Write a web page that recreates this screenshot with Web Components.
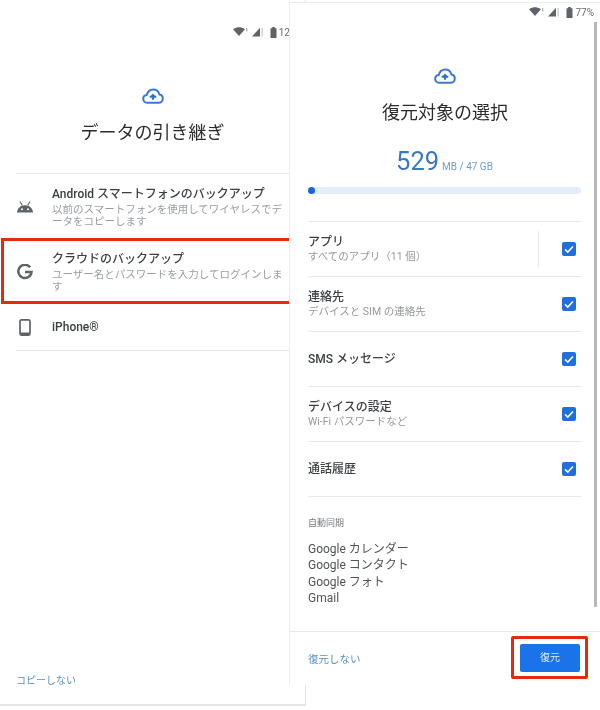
<!DOCTYPE html>
<html lang="ja">
<head>
<meta charset="utf-8">
<title>復元対象の選択</title>
<style>
  html, body { margin: 0; background: #fff; }
  body {
    position: relative;
    width: 600px;
    height: 710px;
    overflow: hidden;
    font-family: Roboto, "Noto Sans CJK JP", sans-serif;
    color: #3c4043;
    filter: blur(0.45px);
  }
  #left { position: absolute; left: 0; top: 0; width: 306px; height: 706px; }
  #right { position: absolute; left: 289px; top: 2px; width: 311px; height: 683px; }
</style>
</head>
<body>

<phone-screen id="left" variant="left">
  <status-bar slot="status" level="12" style="--top:25px; --right:15px"></status-bar>
  <screen-title slot="head" text="データの引き継ぎ" top="88"></screen-title>
  <option-list slot="body">
    <option-row icon="android" name="Android スマートフォンのバックアップ" sub="以前のスマートフォンを使用してワイヤレスでデータをコピーします"></option-row>
    <option-row icon="google" marked name="クラウドのバックアップ" sub="ユーザー名とパスワードを入力してログインします"></option-row>
    <option-row icon="phone" name="iPhone®"></option-row>
  </option-list>
  <footer-link slot="foot" text="コピーしない"></footer-link>
</phone-screen>

<phone-screen id="right" variant="right">
  <status-bar slot="status" level="77%" style="--top:2px; --right:6px"></status-bar>
  <screen-title slot="head" text="復元対象の選択" top="65"></screen-title>
  <restore-content slot="body">
    <restore-row name="アプリ" sub="すべてのアプリ（11 個）" split></restore-row>
    <restore-row name="連絡先" sub="デバイスと SIM の連絡先"></restore-row>
    <restore-row name="SMS メッセージ"></restore-row>
    <restore-row name="デバイスの設定" sub="Wi-Fi パスワードなど"></restore-row>
    <restore-row name="通話履歴"></restore-row>
  </restore-content>
  <restore-footer slot="foot"></restore-footer>
</phone-screen>

<script>
class PhoneScreen extends HTMLElement {
  constructor() {
    super();
    this.attachShadow({ mode: 'open' });
    this.shadowRoot.innerHTML = `
      <style>
        :host {
          display: flex;
          flex-direction: column;
          box-sizing: border-box;
          background: #fff;
          overflow: hidden;
        }
        :host([variant="left"]) {
          border-right: 1px solid #e4e4e4;
          border-bottom: 2px solid #e6e6e6;
        }
        :host([variant="right"]) {
          border-left: 1px solid #ececec;
          border-top: 1px solid #ececec;
        }
        .grow { flex: 1; min-height: 0; }
        .scroll {
          display: none;
          position: absolute;
          right: 3px;
          top: 19px;
          width: 3px;
          height: 585px;
          background: #b8b8b8;
        }
        :host([variant="right"]) .scroll { display: block; }
      </style>
      <slot name="status"></slot>
      <slot name="head"></slot>
      <div class="grow"><slot name="body"></slot></div>
      <slot name="foot"></slot>
      <div class="scroll"></div>
    `;
  }
}

class StatusBar extends HTMLElement {
  constructor() {
    super();
    this.attachShadow({ mode: 'open' });
    const level = this.getAttribute('level');
    this.shadowRoot.innerHTML = `
      <style>
        :host {
          display: flex;
          position: absolute;
          top: var(--top);
          right: var(--right);
          align-items: center;
          gap: 3px;
          height: 14px;
          font-size: 10px;
          color: #6a6a6a;
        }
        svg { display: block; fill: #5f6368; }
        .sig { margin-left: 1px; }
        .bat { margin-left: 3px; margin-right: -1px; }
      </style>
      <svg width="15" height="10" viewBox="0 0 15 10">
        <path d="M0 2.200C2.200.8 4.400.2 6 .2s3.800.6 6 2L6 9z"/>
        <rect x="13" y="1" width="1.300" height="3.500" opacity=".5"/>
      </svg>
      <svg class="sig" width="12" height="10" viewBox="0 0 12 10">
        <path d="M0 9.500 8 .8v8.700z"/>
        <rect x="9.500" y="1" width="1.300" height="8.500" opacity=".35"/>
      </svg>
      <svg class="bat" width="7" height="11" viewBox="0 0 7 11">
        <path d="M2.200 0h2.600v1.200H6.500V11H.5V1.200h1.700z"/>
      </svg>
      <span>${level}</span>
    `;
  }
}

class CloudIcon extends HTMLElement {
  constructor() {
    super();
    this.attachShadow({ mode: 'open' });
    this.shadowRoot.innerHTML = `
      <style>
        :host { display: block; width: 22px; height: 16px; }
        svg { display: block; }
      </style>
      <svg width="22" height="16" viewBox="0 0 22 16" fill="none">
        <path d="M5.200 14.800C2.800 14.800 1.200 13 1.200 10.900c0-2 1.500-3.600 3.500-3.800C5.500 4 8 1.500 11.300 1.500c3 0 5.400 2 6 4.900 2 .3 3.500 2 3.500 4.100 0 2.400-1.800 4.300-4.200 4.300z" stroke="#3b78d0" stroke-width="2"/>
        <path d="M11 5.600l2.100 2.200h1.200v1.900h-2.200v2.100H9.900V9.700H7.700V7.800h1.200z" fill="#2f6fcc"/>
      </svg>
    `;
  }
}

class ScreenTitle extends HTMLElement {
  constructor() {
    super();
    this.attachShadow({ mode: 'open' });
    const top = this.getAttribute('top');
    this.shadowRoot.innerHTML = `
      <style>
        :host {
          display: flex;
          flex-direction: column;
          align-items: center;
          padding-top: ${top}px;
          flex: none;
        }
        h1 {
          margin: 16px 0 0;
          font-size: 18px;
          font-weight: 400;
          line-height: 26px;
          color: #2b2b2b;
        }
      </style>
      <cloud-icon></cloud-icon>
      <h1>${this.getAttribute('text')}</h1>
    `;
  }
}

class OptionList extends HTMLElement {
  constructor() {
    super();
    this.attachShadow({ mode: 'open' });
    this.shadowRoot.innerHTML = `
      <style>
        :host {
          display: block;
          margin: 27px 0 0 16px;
          border-top: 1px solid #e8e8e8;
          border-bottom: 1px solid #e8e8e8;
        }
      </style>
      <slot></slot>
    `;
  }
}

const optionIcons = {
  android: `<svg width="18" height="12" viewBox="0 0 18 12" fill="#5f6368">
      <path d="M1 11.500C1.300 7.500 4 4.200 9 4.200s7.700 3.300 8 7.300z"/>
      <path d="M4 .5l2.400 4M14 .5l-2.400 4" stroke="#5f6368" stroke-width="1.100"/>
      <circle cx="6" cy="8.300" r="1" fill="#fff"/><circle cx="12" cy="8.300" r="1" fill="#fff"/>
    </svg>`,
  google: `<svg width="16" height="16" viewBox="0 0 16 16" fill="none">
      <path d="M13.100 3.300A6.600 6.600 0 1 0 14.500 8.100H8" stroke="#5f6368" stroke-width="2.500"/>
    </svg>`,
  phone: `<svg width="12" height="17" viewBox="0 0 12 17" fill="none">
      <rect x="1" y=".9" width="10" height="15.200" rx="1.500" stroke="#5f6368" stroke-width="1.700"/>
      <rect x="1" y="13.500" width="10" height="2.600" fill="#5f6368"/>
    </svg>`
};

class OptionRow extends HTMLElement {
  constructor() {
    super();
    this.attachShadow({ mode: 'open' });
    const sub = this.getAttribute('sub');
    this.shadowRoot.innerHTML = `
      <style>
        :host {
          display: flex;
          position: relative;
          align-items: center;
          box-sizing: border-box;
          height: 65px;
        }
        :host(:last-child) { height: 46px; }
        .icon { width: 36px; flex: none; display: flex; justify-content: center; padding-right: 18px; box-sizing: border-box; }
        .txt { width: 234px; flex: none; padding-top: 2px; }
        :host(:last-child) .txt { padding-top: 0; }
        .name { font-size: 12px; line-height: 16px; color: #3c4043; font-weight: 500; }
        .sub { font-size: 10.500px; line-height: 12.500px; color: #9a9ea3; margin-top: 1.500px; }
        .mark {
          display: none;
          position: absolute;
          left: -15px;
          top: -1px;
          width: 400px;
          height: 66px;
          box-sizing: border-box;
          border: 3px solid #e6290f;
        }
        :host([marked]) .mark { display: block; }
      </style>
      <div class="icon">${optionIcons[this.getAttribute('icon')]}</div>
      <div class="txt">
        <div class="name">${this.getAttribute('name')}</div>
        ${sub ? `<div class="sub">${sub}</div>` : ''}
      </div>
      <div class="mark"></div>
    `;
  }
}

class FooterLink extends HTMLElement {
  constructor() {
    super();
    this.attachShadow({ mode: 'open' });
    this.shadowRoot.innerHTML = `
      <style>
        :host {
          display: block;
          padding: 0 0 18px 16px;
          font-size: 10px;
          line-height: 14px;
          color: #5b8fc4;
          margin-bottom: -2px;
        }
      </style>
      ${this.getAttribute('text')}
    `;
  }
}

class RestoreContent extends HTMLElement {
  constructor() {
    super();
    this.attachShadow({ mode: 'open' });
    this.shadowRoot.innerHTML = `
      <style>
        :host {
          display: block;
          position: relative;
          height: 100%;
          padding: 0 19px 0 18px;
        }
        .size {
          display: flex;
          justify-content: center;
          align-items: baseline;
          gap: 3px;
          padding-top: 19px;
          color: #3b78c4;
          line-height: 32px;
          font-size: 25.500px;
        }
        .size small { font-size: 10px; color: #6f9ccc; }
        .bar {
          position: relative;
          height: 7px;
          margin-top: 4px;
          border-radius: 4px;
          background: #e4eefb;
        }
        .bar i {
          position: absolute;
          left: 0;
          top: 0;
          width: 7px;
          height: 7px;
          border-radius: 50%;
          background: #1a66d6;
        }
        .list { margin-top: 27px; border-top: 1px solid #e8e8e8; }
        .sync { padding-top: 20px; }
        .sync h2 { margin: 0 0 12px; font-size: 9px; font-weight: 400; line-height: 12px; color: #77797c; }
        .sync div { font-size: 12px; line-height: 16.300px; color: #505356; }
      </style>
      <div class="size"><span>529</span><small>MB / 47 GB</small></div>
      <div class="bar"><i></i></div>
      <div class="list"><slot></slot></div>
      <div class="sync">
        <h2>自動同期</h2>
        <div>Google カレンダー</div>
        <div>Google コンタクト</div>
        <div>Google フォト</div>
        <div>Gmail</div>
      </div>
    `;
  }
}

class RestoreRow extends HTMLElement {
  constructor() {
    super();
    this.attachShadow({ mode: 'open' });
    const sub = this.getAttribute('sub');
    this.shadowRoot.innerHTML = `
      <style>
        :host {
          display: flex;
          align-items: center;
          box-sizing: border-box;
          height: 55px;
          border-bottom: 1px solid #e8e8e8;
        }
        .txt { flex: 1; padding-top: 1px; }
        .name { font-size: 12px; line-height: 15px; color: #3c4043; font-weight: 500; }
        .sub { font-size: 10.500px; line-height: 14px; color: #95989c; }
        .rule { display: none; width: 1px; height: 36px; background: #e8e8e8; margin-right: 23px; }
        :host([split]) .rule { display: block; }
        .check { margin-right: 5px; width: 14px; height: 14px; border-radius: 2px; background: #1f6fdc; }
        :host(:not([split])) .check { margin-left: 24px; }
        svg { display: block; }
      </style>
      <div class="txt">
        <div class="name">${this.getAttribute('name')}</div>
        ${sub ? `<div class="sub">${sub}</div>` : ''}
      </div>
      <div class="rule"></div>
      <div class="check">
        <svg width="14" height="14" viewBox="0 0 14 14" fill="none">
          <path d="M3 7.300l2.800 2.700L11 4.500" stroke="#fff" stroke-width="1.600"/>
        </svg>
      </div>
    `;
  }
}

class RestoreFooter extends HTMLElement {
  constructor() {
    super();
    this.attachShadow({ mode: 'open' });
    this.shadowRoot.innerHTML = `
      <style>
        :host {
          display: flex;
          align-items: center;
          justify-content: space-between;
          box-sizing: border-box;
          flex: none;
          height: 54px;
          padding: 0 20px 0 18px;
          border-top: 1px solid #e8e8e8;
          position: relative;
        }
        a { font-size: 10.500px; color: #5b8fc4; }
        button {
          all: unset;
          box-sizing: border-box;
          width: 60px;
          height: 28px;
          margin-top: -2px;
          border-radius: 2px;
          background: #1a73e8;
          color: #dfe9f7;
          font-size: 10px;
          text-align: center;
          line-height: 28px;
        }
        .mark {
          position: absolute;
          right: 12px;
          top: 4px;
          width: 77px;
          height: 43px;
          box-sizing: border-box;
          border: 3px solid #e6290f;
          border-radius: 2px;
        }
      </style>
      <a>復元しない</a>
      <button>復元</button>
      <div class="mark"></div>
    `;
  }
}

customElements.define('phone-screen', PhoneScreen);
customElements.define('status-bar', StatusBar);
customElements.define('cloud-icon', CloudIcon);
customElements.define('screen-title', ScreenTitle);
customElements.define('option-list', OptionList);
customElements.define('option-row', OptionRow);
customElements.define('footer-link', FooterLink);
customElements.define('restore-content', RestoreContent);
customElements.define('restore-row', RestoreRow);
customElements.define('restore-footer', RestoreFooter);
</script>
</body>
</html>
